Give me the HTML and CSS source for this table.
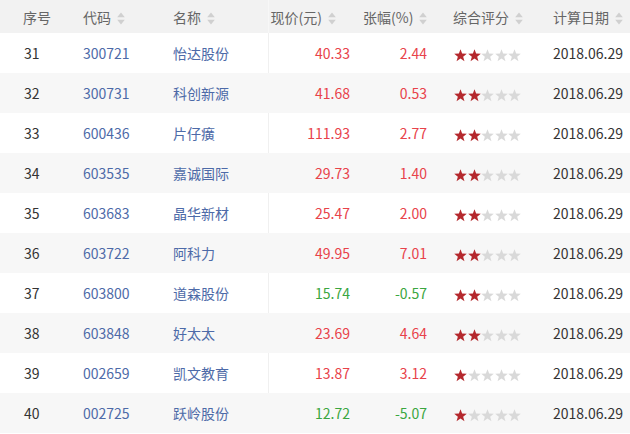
FILE: index.html
```html
<!DOCTYPE html>
<html lang="zh">
<head>
<meta charset="utf-8">
<link rel="stylesheet" href="styles.css">
</head>
<body>
<svg class="defs" width="0" height="0" aria-hidden="true">
  <symbol id="star" viewBox="0 0 12 12"><path d="M6 0.2 L7.5 4.2 L11.8 4.35 L8.45 7.05 L9.65 11.3 L6 8.85 L2.35 11.3 L3.55 7.05 L0.2 4.35 L4.5 4.2 Z"/></symbol>
  <symbol id="sort" viewBox="0 0 8 13"><path d="M4 0.5 L7.8 5.3 L0.2 5.3 Z M4 12.5 L7.8 7.7 L0.2 7.7 Z"/></symbol>
</svg>
<table class="grid">
  <colgroup>
    <col class="c1"><col class="c2"><col class="c3"><col class="c4"><col class="c5"><col class="c6"><col class="c7">
  </colgroup>
  <thead>
    <tr>
      <th class="h1">序号</th>
      <th class="h2">代码<svg class="sort"><use href="#sort"/></svg></th>
      <th class="h3 sep">名称<svg class="sort"><use href="#sort"/></svg></th>
      <th class="h4">现价(元)<svg class="sort"><use href="#sort"/></svg></th>
      <th class="h5">张幅(%)<svg class="sort"><use href="#sort"/></svg></th>
      <th class="h6">综合评分<svg class="sort"><use href="#sort"/></svg></th>
      <th class="h7">计算日期<svg class="sort"><use href="#sort"/></svg></th>
    </tr>
  </thead>
  <tbody id="rows">
    <tr><td class="d1">31</td><td class="d2">300721</td><td class="d3 sep">怡达股份</td><td class="d4 up">40.33</td><td class="d5 up">2.44</td><td class="d6"><span class="stars s2"><svg><use href="#star"/></svg><svg><use href="#star"/></svg><svg><use href="#star"/></svg><svg><use href="#star"/></svg><svg><use href="#star"/></svg></span></td><td class="d7">2018.06.29</td></tr>
    <tr><td class="d1">32</td><td class="d2">300731</td><td class="d3 sep">科创新源</td><td class="d4 up">41.68</td><td class="d5 up">0.53</td><td class="d6"><span class="stars s2"><svg><use href="#star"/></svg><svg><use href="#star"/></svg><svg><use href="#star"/></svg><svg><use href="#star"/></svg><svg><use href="#star"/></svg></span></td><td class="d7">2018.06.29</td></tr>
    <tr><td class="d1">33</td><td class="d2">600436</td><td class="d3 sep">片仔癀</td><td class="d4 up">111.93</td><td class="d5 up">2.77</td><td class="d6"><span class="stars s2"><svg><use href="#star"/></svg><svg><use href="#star"/></svg><svg><use href="#star"/></svg><svg><use href="#star"/></svg><svg><use href="#star"/></svg></span></td><td class="d7">2018.06.29</td></tr>
    <tr><td class="d1">34</td><td class="d2">603535</td><td class="d3 sep">嘉诚国际</td><td class="d4 up">29.73</td><td class="d5 up">1.40</td><td class="d6"><span class="stars s2"><svg><use href="#star"/></svg><svg><use href="#star"/></svg><svg><use href="#star"/></svg><svg><use href="#star"/></svg><svg><use href="#star"/></svg></span></td><td class="d7">2018.06.29</td></tr>
    <tr><td class="d1">35</td><td class="d2">603683</td><td class="d3 sep">晶华新材</td><td class="d4 up">25.47</td><td class="d5 up">2.00</td><td class="d6"><span class="stars s2"><svg><use href="#star"/></svg><svg><use href="#star"/></svg><svg><use href="#star"/></svg><svg><use href="#star"/></svg><svg><use href="#star"/></svg></span></td><td class="d7">2018.06.29</td></tr>
    <tr><td class="d1">36</td><td class="d2">603722</td><td class="d3 sep">阿科力</td><td class="d4 up">49.95</td><td class="d5 up">7.01</td><td class="d6"><span class="stars s2"><svg><use href="#star"/></svg><svg><use href="#star"/></svg><svg><use href="#star"/></svg><svg><use href="#star"/></svg><svg><use href="#star"/></svg></span></td><td class="d7">2018.06.29</td></tr>
    <tr><td class="d1">37</td><td class="d2">603800</td><td class="d3 sep">道森股份</td><td class="d4 down">15.74</td><td class="d5 down">-0.57</td><td class="d6"><span class="stars s2"><svg><use href="#star"/></svg><svg><use href="#star"/></svg><svg><use href="#star"/></svg><svg><use href="#star"/></svg><svg><use href="#star"/></svg></span></td><td class="d7">2018.06.29</td></tr>
    <tr><td class="d1">38</td><td class="d2">603848</td><td class="d3 sep">好太太</td><td class="d4 up">23.69</td><td class="d5 up">4.64</td><td class="d6"><span class="stars s2"><svg><use href="#star"/></svg><svg><use href="#star"/></svg><svg><use href="#star"/></svg><svg><use href="#star"/></svg><svg><use href="#star"/></svg></span></td><td class="d7">2018.06.29</td></tr>
    <tr><td class="d1">39</td><td class="d2">002659</td><td class="d3 sep">凯文教育</td><td class="d4 up">13.87</td><td class="d5 up">3.12</td><td class="d6"><span class="stars s1"><svg><use href="#star"/></svg><svg><use href="#star"/></svg><svg><use href="#star"/></svg><svg><use href="#star"/></svg><svg><use href="#star"/></svg></span></td><td class="d7">2018.06.29</td></tr>
    <tr><td class="d1">40</td><td class="d2">002725</td><td class="d3 sep">跃岭股份</td><td class="d4 down">12.72</td><td class="d5 down">-5.07</td><td class="d6"><span class="stars s1"><svg><use href="#star"/></svg><svg><use href="#star"/></svg><svg><use href="#star"/></svg><svg><use href="#star"/></svg><svg><use href="#star"/></svg></span></td><td class="d7">2018.06.29</td></tr>
  </tbody>
</table>
</body>
</html>
```
FILE: styles.css
```css
html, body {
  margin: 0;
  padding: 0;
  background: #fff;
}
body {
  width: 630px;
  height: 434px;
  overflow: hidden;
  font-family: "Noto Sans CJK SC", "Noto Sans", sans-serif;
  font-size: 14px;
  color: #333;
}
.defs {
  position: absolute;
  width: 0;
  height: 0;
}
.grid {
  width: 630px;
  border-collapse: collapse;
  table-layout: fixed;
}
.c1 { width: 70px; }
.c2 { width: 90px; }
.c3 { width: 108px; }
.c4 { width: 92px; }
.c5 { width: 80px; }
.c6 { width: 100px; }
.c7 { width: 90px; }

thead th {
  height: 33px;
  padding: 0;
  background: #f2f2f2;
  color: #666;
  font-weight: normal;
  text-align: left;
  white-space: nowrap;
  vertical-align: middle;
}
.sort {
  width: 8px;
  height: 13px;
  fill: #d0d0d0;
  margin-left: 6px;
  vertical-align: -2px;
}
.h1 { padding-left: 23px; }
.h2 { padding-left: 13px; }
.h3 { padding-left: 13px; }
.h4 { padding-left: 2px; }
.h5 { padding-left: 3px; }
.h6 { padding-left: 13px; }
.h7 { padding-left: 13px; }

th.sep { border-right: 1px solid #f7f7f7; }
td.sep { border-right: 1px solid #f0f0f0; }

tbody td {
  height: 40px;
  padding: 0;
  white-space: nowrap;
  vertical-align: middle;
}
tbody tr:nth-child(even) td {
  background: #f7f7f7;
}
tbody tr:nth-child(even) td.sep {
  border-right-color: #f7f7f7;
}
.d1 { padding-left: 24px; }
.d2, .d3 { padding-left: 13px; color: #4d6aa8; }
.d4 { text-align: right; padding-right: 10px; }
.d5 { text-align: right; padding-right: 13px; }
.d6 { padding-left: 14px; }
.d7 { padding-left: 13px; color: #333; }

.up { color: #e8424a; }
.down { color: #3aa640; }

.stars {
  display: inline-flex;
  gap: 0.6px;
  vertical-align: middle;
}
.stars svg {
  width: 13px;
  height: 13px;
  fill: #d9d9d9;
}
.s2 svg:nth-child(-n+2),
.s1 svg:nth-child(-n+1) {
  fill: #b5282d;
}
```
